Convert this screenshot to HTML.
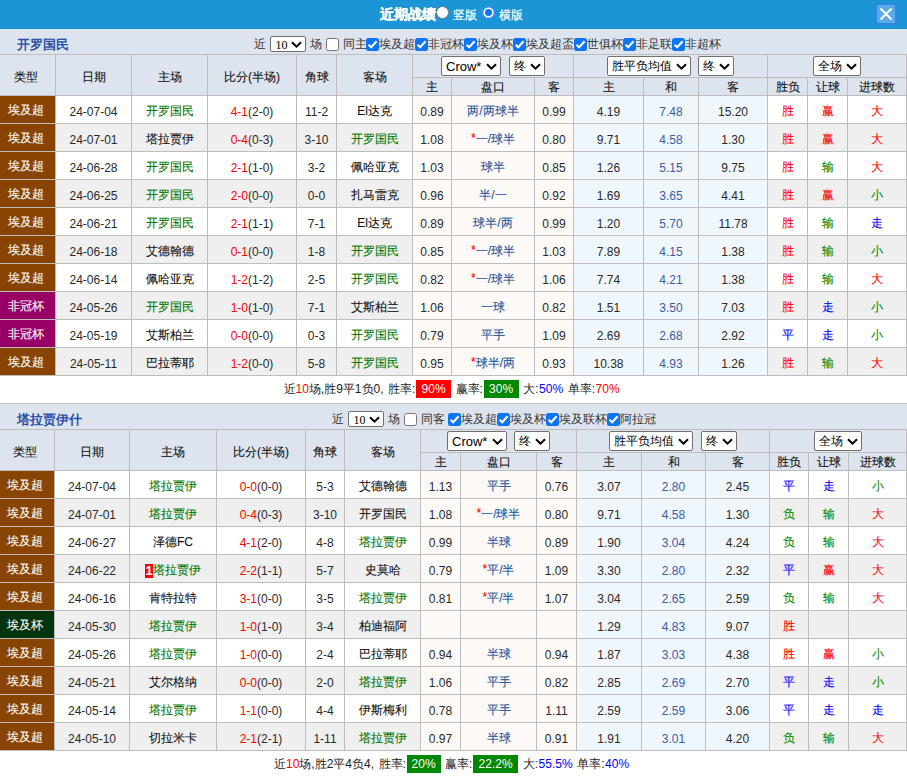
<!DOCTYPE html><html><head><meta charset="utf-8"><style>
*{box-sizing:border-box}
html,body{margin:0;padding:0}
body{width:907px;height:776px;overflow:hidden;position:relative;background:#fff;font-family:"Liberation Sans",sans-serif;font-size:12px;color:#333}
.bar{position:absolute;left:0;top:0;width:907px;height:29px;background:#1b95d6;border-bottom:1px solid #0a8ed4}
.tx{position:absolute;white-space:nowrap;line-height:12px;height:12px}
.rad{position:absolute;border-radius:50%}
.close{position:absolute;left:875px;top:3px;width:22px;height:22px;background:#5aaae8;border:2px solid #2a8ae0}
.sec{position:absolute;left:0;width:907px;background:#dde4ee}
.team{font-weight:bold;font-size:13px;color:#2b50a8;}
.s10{position:absolute;width:36px;height:16px;border:1px solid #707070;border-radius:2px;background:#fff}
.s10 span{position:absolute;left:4.5px;top:1.5px;line-height:12px;font-size:12px;font-family:"Liberation Serif",serif;color:#000}
.s10 .chev{position:absolute;left:20px;top:4px}
.cb{position:absolute;width:13px;height:13px;border:1.3px solid #767676;border-radius:2.5px;background:#fff}
.cb.on{background:#0b75f5;border:none}
.cb svg{position:absolute;left:0;top:0}
.t{position:absolute;left:0;border-collapse:separate;border-spacing:0;table-layout:fixed;width:907px;border-top:1px solid #bdbdbd}
.t th,.t td{border-right:1px solid #bdbdbd;border-bottom:1px solid #bdbdbd;padding:0;text-align:center;white-space:nowrap;overflow:hidden}
.t th{background:#dde4ee;font-weight:normal;color:#111;-webkit-text-stroke:0.1px #111}
.h1 th{height:23px}
.h1 th[rowspan]{padding-top:4px}
.h2 th{height:18px;line-height:16px;padding-top:1px}
.t td{height:28px;padding-top:4px;color:#2a2a2a}
.t td.cj{-webkit-text-stroke:0.1px currentColor;color:#111}
.t td.ty{padding-top:2px}
.t .c1{padding-right:4px}
.t tr.even td{background:#efefef}
.t td.ty{color:#fff}
.t tr td.ah{background:#fdf9f6}
.t tr td.eu{background:#f0f7fc}
.t td.hl{color:#2255a0}
.t td.ed{color:#3a5ba8}
.st{color:#f00;position:relative;top:-1.5px}
.t td.fc{color:#007400}
.sc{color:#f00}
.rc{display:inline-block;background:#f00;color:#fff;font-weight:bold;width:8px;height:14px;line-height:14px;font-size:12px;vertical-align:-1px;text-align:center}
.sel{position:absolute;border:1px solid #707070;border-radius:2px;background:#fff;color:#000;overflow:hidden}
.sel .st1{position:absolute;left:4px;top:3px;line-height:12px;font-size:12px;white-space:nowrap}
.sel.cr .st1{font-size:13px;top:4px}
.sel .chev{position:absolute;right:3px;top:5.5px}
.sum{position:absolute;white-space:nowrap;line-height:18px;height:18px;color:#222;word-spacing:1.2px}
.co{padding-right:0.6px}
.box{display:inline-block;color:#fff;padding:0 5.5px;line-height:18px;height:18px;vertical-align:top;word-spacing:0}
</style></head><body>
<div class="bar"></div>
<div class="tx" style="left:380px;top:7px;line-height:14px;height:14px;font-size:14px;font-weight:bold;color:#fff;-webkit-text-stroke:0.35px #fff">近期战绩</div>
<div class="rad" style="left:436px;top:6px;width:13px;height:13px;background:#fff;border:1px solid #777"></div>
<div class="tx" style="left:453px;top:9px;color:#fff;-webkit-text-stroke:0.2px #fff">竖版</div>
<div class="rad" style="left:482px;top:6px;width:13px;height:13px;background:#0b75f5;box-shadow:inset 0 0 0 1.2px #0b75f5,inset 0 0 0 3px #fff"></div>
<div class="tx" style="left:499px;top:9px;color:#fff;-webkit-text-stroke:0.2px #fff">横版</div>
<div class="close"><svg width="18" height="18" style="position:absolute;left:0;top:0"><path d="M3.5 3.5L14.5 14.5M14.5 3.5L3.5 14.5" stroke="#fff" stroke-width="2"/></svg></div>
<div class="sec" style="top:29px;height:25px;border-top:1px solid #e8e9ec"></div>
<div class="tx team" style="left:17px;top:38px;line-height:13px;height:13px">开罗国民</div>
<div class="tx" style="left:254px;top:38px;">近</div><div class="s10" style="left:270px;top:36px"><span>10</span><svg class="chev" width="11" height="8" viewBox="0 0 11 8"><path d="M1 1.2L5.5 5.7L10 1.2" fill="none" stroke="#000" stroke-width="2"/></svg></div><div class="tx" style="left:310px;top:38px;">场</div><div class="cb" style="left:326px;top:38px"></div><div class="tx" style="left:342.5px;top:38px;">同主</div><div class="cb on" style="left:366px;top:38px"><svg width="13" height="13" viewBox="0 0 13 13"><path d="M2.6 6.8L5.2 9.3L10.6 3.2" fill="none" stroke="#fff" stroke-width="2.1"/></svg></div><div class="tx" style="left:379px;top:38px;">埃及超</div><div class="cb on" style="left:415px;top:38px"><svg width="13" height="13" viewBox="0 0 13 13"><path d="M2.6 6.8L5.2 9.3L10.6 3.2" fill="none" stroke="#fff" stroke-width="2.1"/></svg></div><div class="tx" style="left:428px;top:38px;">非冠杯</div><div class="cb on" style="left:464px;top:38px"><svg width="13" height="13" viewBox="0 0 13 13"><path d="M2.6 6.8L5.2 9.3L10.6 3.2" fill="none" stroke="#fff" stroke-width="2.1"/></svg></div><div class="tx" style="left:477px;top:38px;">埃及杯</div><div class="cb on" style="left:513px;top:38px"><svg width="13" height="13" viewBox="0 0 13 13"><path d="M2.6 6.8L5.2 9.3L10.6 3.2" fill="none" stroke="#fff" stroke-width="2.1"/></svg></div><div class="tx" style="left:526px;top:38px;">埃及超盃</div><div class="cb on" style="left:574px;top:38px"><svg width="13" height="13" viewBox="0 0 13 13"><path d="M2.6 6.8L5.2 9.3L10.6 3.2" fill="none" stroke="#fff" stroke-width="2.1"/></svg></div><div class="tx" style="left:587px;top:38px;">世俱杯</div><div class="cb on" style="left:623px;top:38px"><svg width="13" height="13" viewBox="0 0 13 13"><path d="M2.6 6.8L5.2 9.3L10.6 3.2" fill="none" stroke="#fff" stroke-width="2.1"/></svg></div><div class="tx" style="left:636px;top:38px;">非足联</div><div class="cb on" style="left:672px;top:38px"><svg width="13" height="13" viewBox="0 0 13 13"><path d="M2.6 6.8L5.2 9.3L10.6 3.2" fill="none" stroke="#fff" stroke-width="2.1"/></svg></div><div class="tx" style="left:685px;top:38px;">非超杯</div>
<table class="t" style="top:54px">
<colgroup><col style="width:56px"><col style="width:76px"><col style="width:76px"><col style="width:89px"><col style="width:40px"><col style="width:76px"><col style="width:39px"><col style="width:83px"><col style="width:39px"><col style="width:70px"><col style="width:55px"><col style="width:69px"><col style="width:40px"><col style="width:40px"><col style="width:59px"></colgroup>
<tr class="h1"><th rowspan="2" class="c1">类型</th><th rowspan="2">日期</th><th rowspan="2">主场</th><th rowspan="2">比分(半场)</th><th rowspan="2">角球</th><th rowspan="2">客场</th><th colspan="3"></th><th colspan="3"></th><th colspan="3"></th></tr>
<tr class="h2"><th>主</th><th>盘口</th><th>客</th><th>主</th><th>和</th><th>客</th><th>胜负</th><th>让球</th><th>进球数</th></tr>
<tr class="odd"><td class="ty c1 cj" style="background:#884400">埃及超</td><td>24-07-04</td><td class="cj fc">开罗国民</td><td><span class="sc">4-1</span>(2-0)</td><td>11-2</td><td class="cj ">El达克</td><td class="ah">0.89</td><td class="ah hl cj">两/两球半</td><td class="ah">0.99</td><td class="eu">4.19</td><td class="eu ed">7.48</td><td class="eu">15.20</td><td class="cj" style="color:#f00">胜</td><td class="cj" style="color:#f00">赢</td><td class="cj" style="color:#f00">大</td></tr>
<tr class="even"><td class="ty c1 cj" style="background:#884400">埃及超</td><td>24-07-01</td><td class="cj ">塔拉贾伊</td><td><span class="sc">0-4</span>(0-3)</td><td>3-10</td><td class="cj fc">开罗国民</td><td class="ah">1.08</td><td class="ah hl cj"><span class=st>*</span>一/球半</td><td class="ah">0.80</td><td class="eu">9.71</td><td class="eu ed">4.58</td><td class="eu">1.30</td><td class="cj" style="color:#f00">胜</td><td class="cj" style="color:#f00">赢</td><td class="cj" style="color:#f00">大</td></tr>
<tr class="odd"><td class="ty c1 cj" style="background:#884400">埃及超</td><td>24-06-28</td><td class="cj fc">开罗国民</td><td><span class="sc">2-1</span>(1-0)</td><td>3-2</td><td class="cj ">佩哈亚克</td><td class="ah">1.03</td><td class="ah hl cj">球半</td><td class="ah">0.85</td><td class="eu">1.26</td><td class="eu ed">5.15</td><td class="eu">9.75</td><td class="cj" style="color:#f00">胜</td><td class="cj" style="color:#080">输</td><td class="cj" style="color:#f00">大</td></tr>
<tr class="even"><td class="ty c1 cj" style="background:#884400">埃及超</td><td>24-06-25</td><td class="cj fc">开罗国民</td><td><span class="sc">2-0</span>(0-0)</td><td>0-0</td><td class="cj ">扎马雷克</td><td class="ah">0.96</td><td class="ah hl cj">半/一</td><td class="ah">0.92</td><td class="eu">1.69</td><td class="eu ed">3.65</td><td class="eu">4.41</td><td class="cj" style="color:#f00">胜</td><td class="cj" style="color:#f00">赢</td><td class="cj" style="color:#080">小</td></tr>
<tr class="odd"><td class="ty c1 cj" style="background:#884400">埃及超</td><td>24-06-21</td><td class="cj fc">开罗国民</td><td><span class="sc">2-1</span>(1-1)</td><td>7-1</td><td class="cj ">El达克</td><td class="ah">0.89</td><td class="ah hl cj">球半/两</td><td class="ah">0.99</td><td class="eu">1.20</td><td class="eu ed">5.70</td><td class="eu">11.78</td><td class="cj" style="color:#f00">胜</td><td class="cj" style="color:#080">输</td><td class="cj" style="color:#00f">走</td></tr>
<tr class="even"><td class="ty c1 cj" style="background:#884400">埃及超</td><td>24-06-18</td><td class="cj ">艾德翰德</td><td><span class="sc">0-1</span>(0-0)</td><td>1-8</td><td class="cj fc">开罗国民</td><td class="ah">0.85</td><td class="ah hl cj"><span class=st>*</span>一/球半</td><td class="ah">1.03</td><td class="eu">7.89</td><td class="eu ed">4.15</td><td class="eu">1.38</td><td class="cj" style="color:#f00">胜</td><td class="cj" style="color:#080">输</td><td class="cj" style="color:#080">小</td></tr>
<tr class="odd"><td class="ty c1 cj" style="background:#884400">埃及超</td><td>24-06-14</td><td class="cj ">佩哈亚克</td><td><span class="sc">1-2</span>(1-2)</td><td>2-5</td><td class="cj fc">开罗国民</td><td class="ah">0.82</td><td class="ah hl cj"><span class=st>*</span>一/球半</td><td class="ah">1.06</td><td class="eu">7.74</td><td class="eu ed">4.21</td><td class="eu">1.38</td><td class="cj" style="color:#f00">胜</td><td class="cj" style="color:#080">输</td><td class="cj" style="color:#f00">大</td></tr>
<tr class="even"><td class="ty c1 cj" style="background:#990066">非冠杯</td><td>24-05-26</td><td class="cj fc">开罗国民</td><td><span class="sc">1-0</span>(1-0)</td><td>7-1</td><td class="cj ">艾斯柏兰</td><td class="ah">1.06</td><td class="ah hl cj">一球</td><td class="ah">0.82</td><td class="eu">1.51</td><td class="eu ed">3.50</td><td class="eu">7.03</td><td class="cj" style="color:#f00">胜</td><td class="cj" style="color:#00f">走</td><td class="cj" style="color:#080">小</td></tr>
<tr class="odd"><td class="ty c1 cj" style="background:#990066">非冠杯</td><td>24-05-19</td><td class="cj ">艾斯柏兰</td><td><span class="sc">0-0</span>(0-0)</td><td>0-3</td><td class="cj fc">开罗国民</td><td class="ah">0.79</td><td class="ah hl cj">平手</td><td class="ah">1.09</td><td class="eu">2.69</td><td class="eu ed">2.68</td><td class="eu">2.92</td><td class="cj" style="color:#00f">平</td><td class="cj" style="color:#00f">走</td><td class="cj" style="color:#080">小</td></tr>
<tr class="even"><td class="ty c1 cj" style="background:#884400">埃及超</td><td>24-05-11</td><td class="cj ">巴拉蒂耶</td><td><span class="sc">1-2</span>(0-0)</td><td>5-8</td><td class="cj fc">开罗国民</td><td class="ah">0.95</td><td class="ah hl cj"><span class=st>*</span>球半/两</td><td class="ah">0.93</td><td class="eu">10.38</td><td class="eu ed">4.93</td><td class="eu">1.26</td><td class="cj" style="color:#f00">胜</td><td class="cj" style="color:#080">输</td><td class="cj" style="color:#f00">大</td></tr>
</table>
<div class="sel cr" style="left:441px;top:56px;width:60px;height:20px"><span class="st1">Crow*</span><svg class="chev" width="11" height="8" viewBox="0 0 11 8"><path d="M1 1.2L5.5 5.7L10 1.2" fill="none" stroke="#000" stroke-width="2"/></svg></div>
<div class="sel " style="left:509px;top:56px;width:36px;height:20px"><span class="st1">终</span><svg class="chev" width="11" height="8" viewBox="0 0 11 8"><path d="M1 1.2L5.5 5.7L10 1.2" fill="none" stroke="#000" stroke-width="2"/></svg></div>
<div class="sel " style="left:607px;top:56px;width:84px;height:20px"><span class="st1">胜平负均值</span><svg class="chev" width="11" height="8" viewBox="0 0 11 8"><path d="M1 1.2L5.5 5.7L10 1.2" fill="none" stroke="#000" stroke-width="2"/></svg></div>
<div class="sel " style="left:698px;top:56px;width:36px;height:20px"><span class="st1">终</span><svg class="chev" width="11" height="8" viewBox="0 0 11 8"><path d="M1 1.2L5.5 5.7L10 1.2" fill="none" stroke="#000" stroke-width="2"/></svg></div>
<div class="sel " style="left:813px;top:56px;width:48px;height:20px"><span class="st1">全场</span><svg class="chev" width="11" height="8" viewBox="0 0 11 8"><path d="M1 1.2L5.5 5.7L10 1.2" fill="none" stroke="#000" stroke-width="2"/></svg></div>
<div class="sum" style="left:283.5px;top:380px">近<span style="color:#f00">10</span>场,胜9平1负0, 胜率<span class=co>:</span><span class="box" style="background:#f00">90%</span> 赢率<span class=co>:</span><span class="box" style="background:#080">30%</span> 大<span class=co>:</span><span style="color:#00f">50%</span> 单率<span class=co>:</span><span style="color:#f00">70%</span></div>
<div class="sec" style="top:403px;height:26px;border-top:1px solid #bdbdbd"></div>
<div class="tx team" style="left:17px;top:412.5px;line-height:13px;height:13px">塔拉贾伊什</div>
<div class="tx" style="left:332px;top:413px;">近</div><div class="s10" style="left:348px;top:411px"><span>10</span><svg class="chev" width="11" height="8" viewBox="0 0 11 8"><path d="M1 1.2L5.5 5.7L10 1.2" fill="none" stroke="#000" stroke-width="2"/></svg></div><div class="tx" style="left:388px;top:413px;">场</div><div class="cb" style="left:404px;top:413px"></div><div class="tx" style="left:421px;top:413px;">同客</div><div class="cb on" style="left:448px;top:413px"><svg width="13" height="13" viewBox="0 0 13 13"><path d="M2.6 6.8L5.2 9.3L10.6 3.2" fill="none" stroke="#fff" stroke-width="2.1"/></svg></div><div class="tx" style="left:461px;top:413px;">埃及超</div><div class="cb on" style="left:497px;top:413px"><svg width="13" height="13" viewBox="0 0 13 13"><path d="M2.6 6.8L5.2 9.3L10.6 3.2" fill="none" stroke="#fff" stroke-width="2.1"/></svg></div><div class="tx" style="left:510px;top:413px;">埃及杯</div><div class="cb on" style="left:546px;top:413px"><svg width="13" height="13" viewBox="0 0 13 13"><path d="M2.6 6.8L5.2 9.3L10.6 3.2" fill="none" stroke="#fff" stroke-width="2.1"/></svg></div><div class="tx" style="left:559px;top:413px;">埃及联杯</div><div class="cb on" style="left:607px;top:413px"><svg width="13" height="13" viewBox="0 0 13 13"><path d="M2.6 6.8L5.2 9.3L10.6 3.2" fill="none" stroke="#fff" stroke-width="2.1"/></svg></div><div class="tx" style="left:620px;top:413px;">阿拉冠</div>
<table class="t" style="top:429px">
<colgroup><col style="width:55px"><col style="width:75px"><col style="width:87px"><col style="width:89px"><col style="width:39px"><col style="width:76px"><col style="width:40px"><col style="width:76px"><col style="width:40px"><col style="width:65px"><col style="width:64px"><col style="width:64px"><col style="width:39px"><col style="width:40px"><col style="width:58px"></colgroup>
<tr class="h1"><th rowspan="2" class="c1">类型</th><th rowspan="2">日期</th><th rowspan="2">主场</th><th rowspan="2">比分(半场)</th><th rowspan="2">角球</th><th rowspan="2">客场</th><th colspan="3"></th><th colspan="3"></th><th colspan="3"></th></tr>
<tr class="h2"><th>主</th><th>盘口</th><th>客</th><th>主</th><th>和</th><th>客</th><th>胜负</th><th>让球</th><th>进球数</th></tr>
<tr class="odd"><td class="ty c1 cj" style="background:#884400">埃及超</td><td>24-07-04</td><td class="cj fc">塔拉贾伊</td><td><span class="sc">0-0</span>(0-0)</td><td>5-3</td><td class="cj ">艾德翰德</td><td class="ah">1.13</td><td class="ah hl cj">平手</td><td class="ah">0.76</td><td class="eu">3.07</td><td class="eu ed">2.80</td><td class="eu">2.45</td><td class="cj" style="color:#00f">平</td><td class="cj" style="color:#00f">走</td><td class="cj" style="color:#080">小</td></tr>
<tr class="even"><td class="ty c1 cj" style="background:#884400">埃及超</td><td>24-07-01</td><td class="cj fc">塔拉贾伊</td><td><span class="sc">0-4</span>(0-3)</td><td>3-10</td><td class="cj ">开罗国民</td><td class="ah">1.08</td><td class="ah hl cj"><span class=st>*</span>一/球半</td><td class="ah">0.80</td><td class="eu">9.71</td><td class="eu ed">4.58</td><td class="eu">1.30</td><td class="cj" style="color:#080">负</td><td class="cj" style="color:#080">输</td><td class="cj" style="color:#f00">大</td></tr>
<tr class="odd"><td class="ty c1 cj" style="background:#884400">埃及超</td><td>24-06-27</td><td class="cj ">泽德FC</td><td><span class="sc">4-1</span>(2-0)</td><td>4-8</td><td class="cj fc">塔拉贾伊</td><td class="ah">0.99</td><td class="ah hl cj">半球</td><td class="ah">0.89</td><td class="eu">1.90</td><td class="eu ed">3.04</td><td class="eu">4.24</td><td class="cj" style="color:#080">负</td><td class="cj" style="color:#080">输</td><td class="cj" style="color:#f00">大</td></tr>
<tr class="even"><td class="ty c1 cj" style="background:#884400">埃及超</td><td>24-06-22</td><td class="cj fc"><span class="rc">1</span>塔拉贾伊</td><td><span class="sc">2-2</span>(1-1)</td><td>5-7</td><td class="cj ">史莫哈</td><td class="ah">0.79</td><td class="ah hl cj"><span class=st>*</span>平/半</td><td class="ah">1.09</td><td class="eu">3.30</td><td class="eu ed">2.80</td><td class="eu">2.32</td><td class="cj" style="color:#00f">平</td><td class="cj" style="color:#f00">赢</td><td class="cj" style="color:#f00">大</td></tr>
<tr class="odd"><td class="ty c1 cj" style="background:#884400">埃及超</td><td>24-06-16</td><td class="cj ">肯特拉特</td><td><span class="sc">3-1</span>(0-0)</td><td>3-5</td><td class="cj fc">塔拉贾伊</td><td class="ah">0.81</td><td class="ah hl cj"><span class=st>*</span>平/半</td><td class="ah">1.07</td><td class="eu">3.04</td><td class="eu ed">2.65</td><td class="eu">2.59</td><td class="cj" style="color:#080">负</td><td class="cj" style="color:#080">输</td><td class="cj" style="color:#f00">大</td></tr>
<tr class="even"><td class="ty c1 cj" style="background:#00340e">埃及杯</td><td>24-05-30</td><td class="cj fc">塔拉贾伊</td><td><span class="sc">1-0</span>(1-0)</td><td>3-4</td><td class="cj ">柏迪福阿</td><td class="ah"></td><td class="ah hl cj"></td><td class="ah"></td><td class="eu">1.29</td><td class="eu ed">4.83</td><td class="eu">9.07</td><td class="cj" style="color:#f00">胜</td><td class="cj" style="color:#333"></td><td class="cj" style="color:#333"></td></tr>
<tr class="odd"><td class="ty c1 cj" style="background:#884400">埃及超</td><td>24-05-26</td><td class="cj fc">塔拉贾伊</td><td><span class="sc">1-0</span>(0-0)</td><td>2-4</td><td class="cj ">巴拉蒂耶</td><td class="ah">0.94</td><td class="ah hl cj">半球</td><td class="ah">0.94</td><td class="eu">1.87</td><td class="eu ed">3.03</td><td class="eu">4.38</td><td class="cj" style="color:#f00">胜</td><td class="cj" style="color:#f00">赢</td><td class="cj" style="color:#080">小</td></tr>
<tr class="even"><td class="ty c1 cj" style="background:#884400">埃及超</td><td>24-05-21</td><td class="cj ">艾尔格纳</td><td><span class="sc">0-0</span>(0-0)</td><td>2-0</td><td class="cj fc">塔拉贾伊</td><td class="ah">1.06</td><td class="ah hl cj">平手</td><td class="ah">0.82</td><td class="eu">2.85</td><td class="eu ed">2.69</td><td class="eu">2.70</td><td class="cj" style="color:#00f">平</td><td class="cj" style="color:#00f">走</td><td class="cj" style="color:#080">小</td></tr>
<tr class="odd"><td class="ty c1 cj" style="background:#884400">埃及超</td><td>24-05-14</td><td class="cj fc">塔拉贾伊</td><td><span class="sc">1-1</span>(0-0)</td><td>4-4</td><td class="cj ">伊斯梅利</td><td class="ah">0.78</td><td class="ah hl cj">平手</td><td class="ah">1.11</td><td class="eu">2.59</td><td class="eu ed">2.59</td><td class="eu">3.06</td><td class="cj" style="color:#00f">平</td><td class="cj" style="color:#00f">走</td><td class="cj" style="color:#00f">走</td></tr>
<tr class="even"><td class="ty c1 cj" style="background:#884400">埃及超</td><td>24-05-10</td><td class="cj ">切拉米卡</td><td><span class="sc">2-1</span>(2-1)</td><td>1-11</td><td class="cj fc">塔拉贾伊</td><td class="ah">0.97</td><td class="ah hl cj">半球</td><td class="ah">0.91</td><td class="eu">1.91</td><td class="eu ed">3.01</td><td class="eu">4.20</td><td class="cj" style="color:#080">负</td><td class="cj" style="color:#080">输</td><td class="cj" style="color:#f00">大</td></tr>
</table>
<div class="sel cr" style="left:447px;top:431px;width:60px;height:20px"><span class="st1">Crow*</span><svg class="chev" width="11" height="8" viewBox="0 0 11 8"><path d="M1 1.2L5.5 5.7L10 1.2" fill="none" stroke="#000" stroke-width="2"/></svg></div>
<div class="sel " style="left:514px;top:431px;width:36px;height:20px"><span class="st1">终</span><svg class="chev" width="11" height="8" viewBox="0 0 11 8"><path d="M1 1.2L5.5 5.7L10 1.2" fill="none" stroke="#000" stroke-width="2"/></svg></div>
<div class="sel " style="left:609px;top:431px;width:84px;height:20px"><span class="st1">胜平负均值</span><svg class="chev" width="11" height="8" viewBox="0 0 11 8"><path d="M1 1.2L5.5 5.7L10 1.2" fill="none" stroke="#000" stroke-width="2"/></svg></div>
<div class="sel " style="left:701px;top:431px;width:36px;height:20px"><span class="st1">终</span><svg class="chev" width="11" height="8" viewBox="0 0 11 8"><path d="M1 1.2L5.5 5.7L10 1.2" fill="none" stroke="#000" stroke-width="2"/></svg></div>
<div class="sel " style="left:814px;top:431px;width:48px;height:20px"><span class="st1">全场</span><svg class="chev" width="11" height="8" viewBox="0 0 11 8"><path d="M1 1.2L5.5 5.7L10 1.2" fill="none" stroke="#000" stroke-width="2"/></svg></div>
<div class="sum" style="left:274px;top:755px">近<span style="color:#f00">10</span>场,胜2平4负4, 胜率<span class=co>:</span><span class="box" style="background:#080;padding:0 5px">20%</span> 赢率<span class=co>:</span><span class="box" style="background:#080">22.2%</span> 大<span class=co>:</span><span style="color:#00f">55.5%</span> 单率<span class=co>:</span><span style="color:#00f">40%</span></div>
</body></html>
